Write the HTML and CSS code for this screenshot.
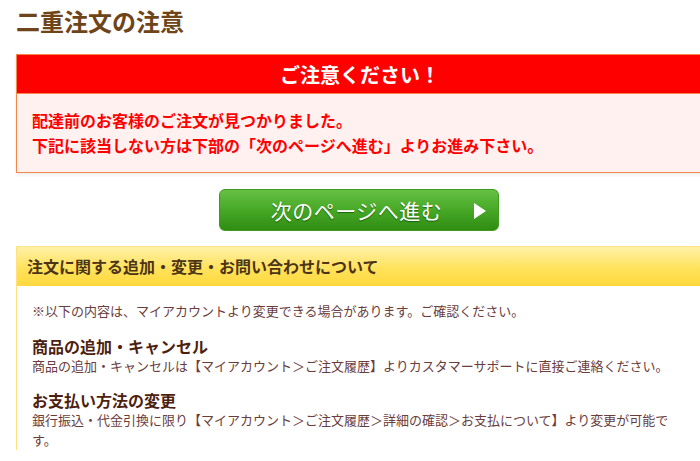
FILE: index.html
```html
<!DOCTYPE html>
<html lang="ja">
<head>
<meta charset="utf-8">
<title>二重注文の注意</title>
<link rel="stylesheet" href="styles.css">
</head>
<body>
<div class="page">
  <h1 class="title">二重注文の注意</h1>

  <section class="alert">
    <div class="alert-head">ご注意ください！</div>
    <div class="alert-body">
      <p>配達前のお客様のご注文が見つかりました。</p>
      <p>下記に該当しない方は下部の「次のページへ進む」よりお進み下さい。</p>
    </div>
  </section>

  <div class="btn-row">
    <a class="next-btn" href="#">
      <span class="next-label">次のページへ進む</span>
      <span class="next-arrow"></span>
    </a>
  </div>

  <section class="info">
    <div class="info-head">注文に関する追加・変更・お問い合わせについて</div>
    <div class="info-body">
      <p class="intro">※以下の内容は、マイアカウントより変更できる場合があります。ご確認ください。</p>
      <h3 class="sub">商品の追加・キャンセル</h3>
      <p class="desc">商品の追加・キャンセルは【マイアカウント＞ご注文履歴】よりカスタマーサポートに直接ご連絡ください。</p>
      <h3 class="sub">お支払い方法の変更</h3>
      <p class="desc">銀行振込・代金引換に限り【マイアカウント＞ご注文履歴＞詳細の確認＞お支払について】より変更が可能です。</p>
    </div>
  </section>
</div>
</body>
</html>
```

FILE: styles.css
```css
html, body {
  margin: 0;
  padding: 0;
  overflow: hidden;
  background: #ffffff;
}
body {
  font-family: "Noto Sans CJK JP", "Noto Sans", sans-serif;
}
.page {
  width: 688px;
  padding: 0 0 0 16px;
}
p, h1, h3 {
  margin: 0;
}
.title {
  padding-top: 4px;
  font-size: 24px;
  line-height: 34px;
  font-weight: bold;
  color: #6e4519;
}
.alert {
  margin-top: 16px;
  border: 1px solid #f3874c;
  box-shadow: 0 2px 3px rgba(0, 0, 0, 0.07);
}
.alert-head {
  background: #ff0000;
  color: #ffffff;
  text-align: center;
  font-size: 20px;
  font-weight: bold;
  line-height: 39px;
  height: 38px;
  border-bottom: 1px solid #f3874c;
}
.alert-body {
  background: #fff1ef;
  padding: 14px 15px;
  color: #ff0000;
  font-size: 16px;
  font-weight: bold;
  line-height: 25px;
}
.btn-row {
  display: flex;
  justify-content: center;
  margin-top: 16px;
  padding-right: 3px;
}
.next-btn {
  width: 280px;
  height: 42px;
  box-sizing: border-box;
  border-radius: 6px;
  border: 1px solid #3f9a1e;
  background: linear-gradient(#66c044 0%, #47a826 50%, #2f8d12 100%);
  display: flex;
  align-items: center;
  justify-content: center;
  text-decoration: none;
  position: relative;
}
.next-label {
  color: #ffffff;
  font-size: 21px;
  line-height: 40px;
  letter-spacing: 0.5px;
  text-shadow: 0 1px 1px rgba(0, 60, 0, 0.6);
  margin-left: -4px;
}
.next-arrow {
  position: absolute;
  right: 12px;
  top: 13px;
  width: 0;
  height: 0;
  border-top: 8px solid transparent;
  border-bottom: 8px solid transparent;
  border-left: 12px solid #ffffff;
}
.info {
  margin-top: 15px;
  border-left: 1px solid #ffe083;
}
.info-head {
  border-top: 1px solid #ffe386;
  height: 39px;
  line-height: 39px;
  padding-left: 10px;
  background: linear-gradient(#fff1a6 0%, #ffe25c 55%, #ffd83c 100%);
  font-size: 16px;
  font-weight: bold;
  color: #4d3414;
}
.info-body {
  padding: 15px 28px 0 15px;
  color: #6a3d3d;
  font-size: 13px;
  line-height: 20px;
  width: 645px;
}
.intro {
  margin-bottom: 15px;
}
.sub {
  font-size: 16px;
  line-height: 20px;
  font-weight: bold;
  color: #4d1f10;
}
.desc {
  margin-bottom: 14px;
  line-break: strict;
}
```
